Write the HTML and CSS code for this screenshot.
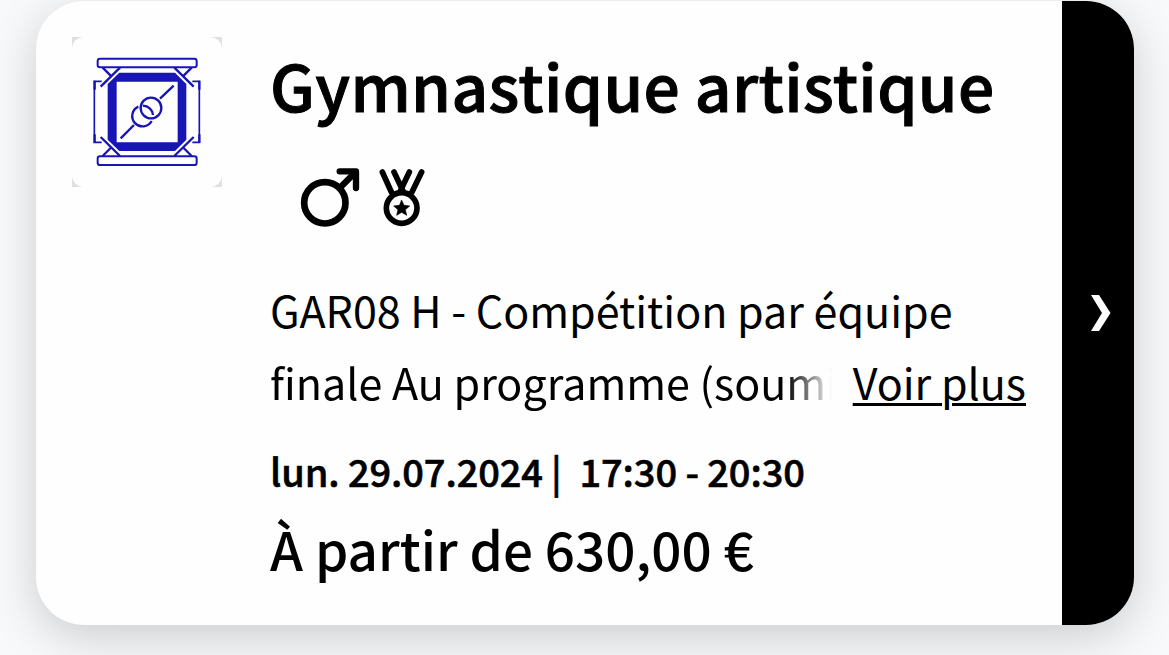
FILE: index.html
```html
<!DOCTYPE html>
<html lang="fr">
<head>
    <meta charset="UTF-8">
    <meta name="viewport" content="width=device-width, initial-scale=1.0">
    <title>Gymnastique artistique</title>
    <link rel="stylesheet" href="styles.css">
</head>
<body>
    <article class="card">
        <div class="card-body">
            <div class="sport-logo">
                <svg viewBox="36 36 450 450" fill="none" stroke="#1815b5" stroke-width="5">
                    <path d="M178 143h167l34 34v167l-34 34H178l-35-34V177zM170 170v182h183V170z" fill="#1815b5" fill-rule="evenodd" stroke="none"/>
                    <rect x="113" y="101" width="297" height="26" rx="7" stroke-width="6"/>
                    <rect x="113" y="394" width="297" height="26" rx="7" stroke-width="6"/>
                    <path d="M125 169H103v183h22M397 169h21v183h-21"/>
                    <path d="M104 167v27M104 328v26M418 167v27M418 328v26" stroke-width="7"/>
                    <path d="M180 128l-58 57M128 128l24 24M343 128l58 57M395 128l-24 24M180 393l-58-57M128 393l24-24M343 393l58-57M395 393l-24-24" stroke-width="7"/>
                    <path d="M182 340l40-40M300 221l41-39" stroke-width="7"/>
                    <path d="M235 245A31 31 0 1 0 275 288M249 242a31 31 0 0 1 30 28" stroke-width="7"/>
                    <circle cx="273" cy="249" r="31" stroke-width="7"/>
                </svg>
            </div>
            <div class="event">
                <h1 class="event-title">Gymnastique artistique</h1>
                <div class="event-icons">
                    <!-- men's event -->
                    <svg class="icon-male" viewBox="45 36 180 183" fill="none" stroke="#000" stroke-linecap="round" stroke-linejoin="round">
                        <circle cx="119.500" cy="143.500" r="62" stroke-width="20"/>
                        <path d="M165 98l46-46" stroke-width="19"/>
                        <path d="M164 49h49v50" stroke-width="19"/>
                        <path d="M190 50h23v25z" fill="#000" stroke-width="6"/>
                    </svg>
                    <!-- medal event -->
                    <svg class="icon-medal" viewBox="282 36 138 183" fill="none" stroke="#000" stroke-linecap="round">
                        <path d="M292 51l27 60M327 51l26 55M373 51l-26 55M410 51l-29 60" stroke-width="17"/>
                        <circle cx="350" cy="159" r="46" stroke-width="17"/>
                        <path d="M350 136l7 15 17 2-13 11 4 17-15-9-15 9 4-17-13-11 17-2z" fill="#000" stroke="#000" stroke-width="2"/>
                    </svg>
                </div>
                <div class="description">
                    <p>GAR08 H - Compétition par équipe</p>
                    <div class="description-more">
                        <p class="faded">finale Au programme (soumi</p>
                        <a class="more-link" href="#">Voir plus</a>
                    </div>
                </div>
                <p class="date"><span>lun. 29.07.2024</span><span class="separator">|</span><span>17:30 - 20:30</span></p>
                <p class="price">À partir de 630,00 €</p>
            </div>
        </div>
        <a class="card-arrow" href="#" aria-label="Voir">
            <svg viewBox="0 0 20 36"><path d="M0 0h8l11.500 18L8 36H0l11-18z" fill="#fff"/></svg>
        </a>
    </article>
</body>
</html>
```

FILE: styles.css
```css
* {
    box-sizing: border-box;
}

body {
    margin: 0;
    padding-top: 1px;
    height: 655px;
    overflow: hidden;
    background-color: #f8f9fb;
    color: #000;
    font-family: "Noto Sans CJK SC", "Noto Sans", sans-serif;
}

h1, p {
    margin: 0;
    white-space: nowrap;
}

svg {
    display: block;
}

.card {
    display: flex;
    width: 1098px;
    height: 624px;
    margin: 0 36px;
    border-radius: 48px;
    background-color: #fefefe;
    box-shadow: 0 12px 48px rgba(0, 0, 0, 0.18);
    overflow: hidden;
}

.card-body {
    display: flex;
    flex: 1;
    padding: 36px 36px 0;
}

.sport-logo {
    width: 150px;
    height: 150px;
    margin-right: 48px;
    background-color: #e0e0e0;
}

.sport-logo svg {
    background-color: #fefefe;
    border-radius: 12px;
}

.event {
    width: 756px;
}

.event-title {
    margin-top: 2px;
    font-size: 64px;
    font-weight: 500;
    line-height: 90px;
    letter-spacing: 0.36px;
    -webkit-text-stroke: 1px #000;
}

.event-icons {
    display: flex;
    gap: 19px;
    margin: 38px 0 0 30px;
}

.icon-male {
    width: 60px;
    height: 61px;
}

.icon-medal {
    width: 46px;
    height: 61px;
}

.description {
    margin-top: 45px;
    font-size: 43px;
    line-height: 72px;
}

.description-more {
    display: flex;
    justify-content: space-between;
}

.faded {
    width: 564px;
    overflow: hidden;
    -webkit-mask-image: linear-gradient(to right, #000 516px, transparent 562px);
    mask-image: linear-gradient(to right, #000 516px, transparent 562px);
}

.more-link {
    color: #000;
    text-decoration: underline;
    text-decoration-thickness: 3px;
    text-underline-offset: 3px;
    white-space: nowrap;
}

.date {
    margin-top: 26px;
    font-size: 38px;
    font-weight: 500;
    line-height: 56px;
    letter-spacing: -0.1px;
    -webkit-text-stroke: 0.6px #000;
}

.separator {
    margin: 0 18px 0 8px;
}

.price {
    margin-top: 11px;
    font-size: 53px;
    font-weight: 500;
    line-height: 76px;
}

.card-arrow {
    display: flex;
    align-items: center;
    justify-content: center;
    width: 72px;
    background-color: #000;
}

.card-arrow svg {
    width: 20px;
    height: 36px;
    margin-left: 5px;
}
```
